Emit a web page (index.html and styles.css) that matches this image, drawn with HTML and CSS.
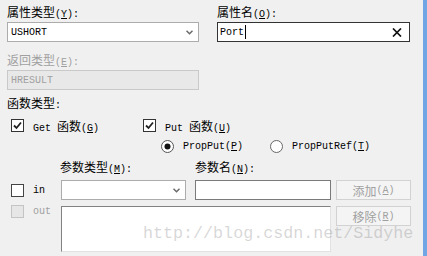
FILE: index.html
```html
<!DOCTYPE html>
<html lang="zh-CN">
<head>
    <meta charset="UTF-8">
    <title>添加属性</title>
    <link rel="stylesheet" href="styles.css">
</head>
<body>
    <div class="window">
        <div class="dialog">
            <div class="pair">
                <div>
                    <div class="lbl">属性类型<span class="en">(<u>Y</u>):</span></div>
                    <div class="combo">
                        <span class="en">USHORT</span>
                        <svg class="arrow" width="7" height="5" viewBox="0 0 7 5"><path d="M0.5 0.8 L3.5 3.8 L6.5 0.8" fill="none" stroke="#6a6a6a" stroke-width="1.5"/></svg>
                    </div>
                </div>
                <div>
                    <div class="lbl">属性名<span class="en">(<u>O</u>):</span></div>
                    <div class="edit focus">
                        <span class="en">Port</span><span class="caret"></span>
                        <svg class="clear" width="10" height="9" viewBox="0 0 10 9"><path d="M1 0.5 L9 8.5 M9 0.5 L1 8.5" stroke="#111" stroke-width="1.7"/></svg>
                    </div>
                </div>
            </div>

            <div class="half">
                <div class="lbl off">返回类型<span class="en">(<u>E</u>):</span></div>
                <div class="edit disabled"><span class="en">HRESULT</span></div>
            </div>

            <div class="lbl group">函数类型<span class="en">:</span></div>

            <div class="checks">
                <div class="check wide">
                    <svg class="box" width="13" height="13" viewBox="0 0 13 13"><rect x="0.5" y="0.5" width="12" height="12" fill="#fff" stroke="#333"/><path d="M3 6.5 L5.5 9 L10 3.5" fill="none" stroke="#222" stroke-width="1.8"/></svg>
                    <span class="text"><span class="en">Get </span>函数<span class="en">(<u>G</u>)</span></span>
                </div>
                <div class="check">
                    <svg class="box" width="13" height="13" viewBox="0 0 13 13"><rect x="0.5" y="0.5" width="12" height="12" fill="#fff" stroke="#333"/><path d="M3 6.5 L5.5 9 L10 3.5" fill="none" stroke="#222" stroke-width="1.8"/></svg>
                    <span class="text"><span class="en">Put </span>函数<span class="en">(<u>U</u>)</span></span>
                </div>
            </div>

            <div class="radios">
                <div class="radio wide">
                    <svg width="13" height="13" viewBox="0 0 13 13"><circle cx="6.5" cy="6.5" r="6" fill="#fff" stroke="#555"/><circle cx="6.5" cy="6.5" r="3" fill="#111"/></svg>
                    <span class="text en">PropPut(<u>P</u>)</span>
                </div>
                <div class="radio">
                    <svg width="13" height="13" viewBox="0 0 13 13"><circle cx="6.5" cy="6.5" r="6" fill="#fff" stroke="#666"/></svg>
                    <span class="text en">PropPutRef(<u>T</u>)</span>
                </div>
            </div>

            <div class="params">
                <div class="lbl plabel col-type">参数类型<span class="en">(<u>M</u>):</span></div>
                <div class="lbl plabel col-name">参数名<span class="en">(<u>N</u>):</span></div>

                <div class="check col-chk">
                    <svg class="box" width="13" height="13" viewBox="0 0 13 13"><rect x="0.5" y="0.5" width="12" height="12" fill="#fff" stroke="#444"/></svg>
                    <span class="text en">in</span>
                </div>
                <div class="combo small col-type">
                    <svg class="arrow" width="7" height="5" viewBox="0 0 7 5"><path d="M0.5 0.8 L3.5 3.8 L6.5 0.8" fill="none" stroke="#6a6a6a" stroke-width="1.5"/></svg>
                </div>
                <div class="edit name col-name"></div>
                <div class="btn col-btn">添加<span class="en">(<u>A</u>)</span></div>

                <div class="check col-chk out">
                    <svg class="box" width="13" height="13" viewBox="0 0 13 13"><rect x="0.5" y="0.5" width="12" height="12" fill="#e6e6e6" stroke="#c4c4c4"/></svg>
                    <span class="text en off">out</span>
                </div>
                <div class="list"></div>
                <div class="btn col-btn">移除<span class="en">(<u>R</u>)</span></div>
            </div>

            <div class="watermark">http://blog.csdn.net/Sidyhe</div>
        </div>
        <div class="edge"></div>
    </div>
</body>
</html>
```

FILE: styles.css
```css
body {
    margin: 0;
    background: #f0f0f0;
    font-family: "Noto Sans CJK SC", sans-serif;
    font-size: 12px;
    color: #000;
    overflow: hidden;
}
.window {
    display: flex;
    width: 427px;
    height: 256px;
}
.dialog {
    flex: 1;
    position: relative;
    padding: 5px 0 0 7px;
}
.edge {
    width: 4px;
    background: #6fa6e3;
}
.en {
    font-family: "Liberation Mono", monospace;
    font-size: 10px;
}
.lbl {
    height: 14px;
    line-height: 14px;
    margin-bottom: 3px;
    white-space: nowrap;
}
.off {
    color: #a0a0a0;
}
.pair {
    display: grid;
    grid-template-columns: 192px 193px;
    column-gap: 18px;
}
.combo, .edit {
    box-sizing: border-box;
    height: 20px;
    display: flex;
    align-items: center;
    padding: 0 3px;
    background: #fff;
    border: 1px solid #acacac;
}
.arrow {
    margin-left: auto;
    margin-right: 2px;
}
.edit.focus {
    border-color: #333;
    padding-left: 2px;
}
.caret {
    width: 1px;
    height: 14px;
    background: #000;
    margin-left: 1px;
}
.clear {
    margin-left: auto;
    margin-right: 4px;
}
.edit.disabled {
    background: #e8e8e8;
    border-color: #c9c9c9;
    color: #a0a0a0;
}
.half {
    width: 192px;
    margin-top: 11px;
}
.group {
    margin-top: 6px;
}
.checks {
    display: flex;
    margin-top: 9px;
    height: 13px;
}
.check, .radio {
    display: flex;
    align-items: center;
    height: 13px;
    white-space: nowrap;
}
.check .text {
    margin-left: 9px;
}
.checks .wide {
    width: 132px;
    margin-left: 4px;
}
.radios {
    display: flex;
    margin-top: 8px;
    padding-left: 154px;
    height: 13px;
}
.radio .text {
    margin-left: 9px;
}
.radios .wide {
    width: 109px;
}
.params {
    display: grid;
    grid-template-columns: 54px 134px 141px 75px;
    grid-template-rows: 14px 20px 46px;
    row-gap: 6px;
    margin-top: 7px;
}
.params .plabel {
    margin: 0;
    grid-row: 1;
}
.params .plabel.col-type {
    margin-left: -1px;
}
.col-chk {
    grid-column: 1;
    grid-row: 2;
    margin-left: 4px;
    align-self: center;
}
.col-chk.out {
    grid-row: 3;
    align-self: start;
    margin-top: -1px;
}
.col-type {
    grid-column: 2;
}
.col-name {
    grid-column: 3;
}
.col-btn {
    grid-column: 4;
}
.combo.small {
    width: 125px;
}
.edit.name {
    width: 136px;
    border-color: #7a7a7a;
}
.btn {
    box-sizing: border-box;
    width: 75px;
    height: 20px;
    border: 1px solid #d2d2d2;
    background: #f4f4f4;
    color: #a0a0a0;
    display: flex;
    align-items: center;
    justify-content: center;
    white-space: nowrap;
}
.list {
    grid-column: 2 / 4;
    grid-row: 3;
    width: 270px;
    box-sizing: border-box;
    background: #fff;
    border: 1px solid #828282;
    border-right-color: #e2e2e2;
    border-bottom-color: #e2e2e2;
}
.watermark {
    position: absolute;
    left: 143px;
    top: 224px;
    font-family: "Liberation Mono", monospace;
    font-size: 16.7px;
    color: rgba(140, 140, 140, 0.35);
    white-space: nowrap;
}
```
